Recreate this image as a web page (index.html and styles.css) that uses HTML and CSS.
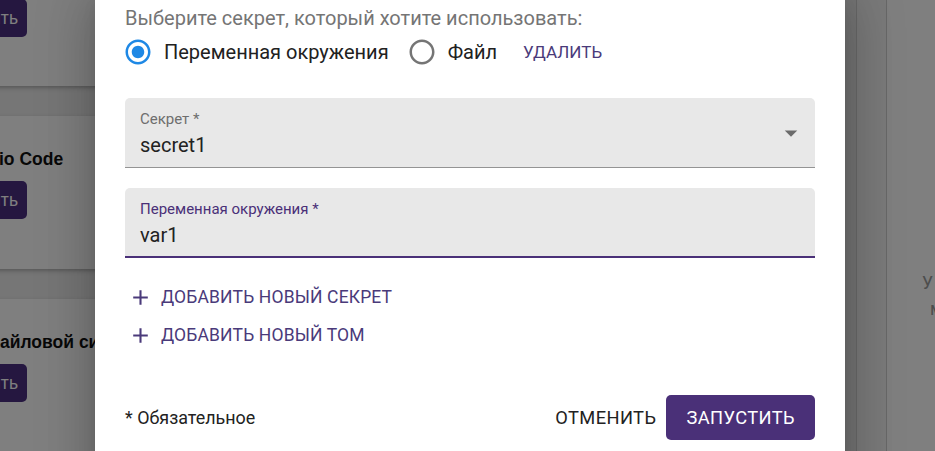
FILE: index.html
```html
<!DOCTYPE html>
<html lang="ru">
<head>
<meta charset="utf-8">
<title>Секрет</title>
<link rel="stylesheet" href="styles.css">
</head>
<body>
<div class="page">
  <div class="cards-col">
    <div class="card">
      <div class="card-title">Jupyter Notebook</div>
      <div class="card-btn">Запустить</div>
    </div>
    <div class="card">
      <div class="card-title">Visual Studio Code</div>
      <div class="card-btn">Запустить</div>
    </div>
    <div class="card">
      <div class="card-title">Доступ к файловой системе</div>
      <div class="card-btn">Запустить</div>
    </div>
  </div>
  <div class="filler"></div>
  <div class="side"></div>
  <div class="main">
    <div class="main-line">У вас пока нет запущенных</div>
    <div class="main-line indent">модулей</div>
  </div>
</div>
<div class="backdrop"></div>
<div class="dialog">
  <p class="heading">Выберите секрет, который хотите использовать:</p>
  <div class="radio-row">
    <label class="radio-opt first">
      <svg class="radio-icon checked" viewBox="0 0 24 24" width="30" height="30"><path d="M12 7c-2.76 0-5 2.24-5 5s2.24 5 5 5 5-2.24 5-5-2.24-5-5-5zm0-5C6.48 2 2 6.48 2 12s4.48 10 10 10 10-4.48 10-10S17.52 2 12 2zm0 18c-4.42 0-8-3.58-8-8s3.58-8 8-8 8 3.58 8 8-3.58 8-8 8z"/></svg>
      <span class="radio-label">Переменная окружения</span>
    </label>
    <label class="radio-opt">
      <svg class="radio-icon" viewBox="0 0 24 24" width="30" height="30"><path d="M12 2C6.48 2 2 6.48 2 12s4.48 10 10 10 10-4.48 10-10S17.52 2 12 2zm0 18c-4.42 0-8-3.58-8-8s3.58-8 8-8 8 3.58 8 8-3.58 8-8 8z"/></svg>
      <span class="radio-label">Файл</span>
    </label>
    <span class="text-btn purple">Удалить</span>
  </div>

  <div class="field">
    <div class="field-text">
      <div class="field-label">Секрет *</div>
      <div class="field-value">secret1</div>
    </div>
    <svg class="drop-icon" viewBox="0 0 24 24" width="30" height="30"><path d="M7 10l5 5 5-5z"/></svg>
  </div>

  <div class="field focused">
    <div class="field-text">
      <div class="field-label">Переменная окружения *</div>
      <div class="field-value">var1</div>
    </div>
  </div>

  <div class="add-list">
    <div class="add-btn">
      <svg viewBox="0 0 24 24" width="25" height="25"><path d="M19 13h-6v6h-2v-6H5v-2h6V5h2v6h6v2z"/></svg>
      <span>Добавить новый секрет</span>
    </div>
    <div class="add-btn">
      <svg viewBox="0 0 24 24" width="25" height="25"><path d="M19 13h-6v6h-2v-6H5v-2h6V5h2v6h6v2z"/></svg>
      <span>Добавить новый том</span>
    </div>
  </div>

  <div class="footer">
    <span class="required">* Обязательное</span>
    <div class="actions">
      <span class="text-btn dark">Отменить</span>
      <span class="primary-btn">Запустить</span>
    </div>
  </div>
</div>
</body>
</html>
```
FILE: styles.css
```css
html, body {
  margin: 0;
  padding: 0;
}
body {
  width: 935px;
  height: 451px;
  overflow: hidden;
  position: relative;
  font-family: Roboto, "Liberation Sans", sans-serif;
}

/* background page */
.page {
  display: flex;
  height: 451px;
  background: #ececec;
}
.cards-col {
  flex: 0 0 400px;
  margin-left: -116px;
  margin-top: -66px;
  display: flex;
  flex-direction: column;
  gap: 30px;
}
.card {
  background: #fff;
  height: 153px;
  box-sizing: border-box;
  padding: 28px 20px 0;
  box-shadow: 0 2px 4px rgba(0, 0, 0, 0.25);
}
.card-title {
  font-family: "Liberation Sans", Arial, sans-serif;
  font-weight: bold;
  font-size: 17.5px;
  line-height: 30px;
  color: #111;
  white-space: nowrap;
}
.card-btn {
  display: inline-block;
  margin-top: 7px;
  margin-left: 23px;
  height: 38px;
  padding: 0 9px;
  border-radius: 5px;
  background: #4a2e80;
  color: #fff;
  font-family: "Liberation Sans", Arial, sans-serif;
  font-size: 17.5px;
  line-height: 38px;
}
.filler {
  flex: 0 0 572px;
}
.side {
  flex: 0 0 29px;
  background: #f4f4f4;
  border-left: 1px solid #d0d0d0;
  border-right: 1px solid #d0d0d0;
}
.main {
  flex: 1;
  background: #fff;
  padding: 270px 0 0 35px;
  color: #9a9a9a;
  font-size: 17.5px;
  line-height: 26px;
  white-space: nowrap;
  overflow: hidden;
}
.main-line.indent {
  padding-left: 8px;
}

.backdrop {
  position: absolute;
  inset: 0;
  background: rgba(0, 0, 0, 0.5);
}

/* dialog */
.dialog {
  position: absolute;
  left: 95px;
  top: -20px;
  width: 750px;
  height: 520px;
  box-sizing: border-box;
  padding: 26px 30px 0;
  background: #fff;
  border-radius: 5px;
  box-shadow: 0 14px 19px -9px rgba(0, 0, 0, 0.2), 0 30px 48px 4px rgba(0, 0, 0, 0.14), 0 11px 58px 10px rgba(0, 0, 0, 0.12);
}
.heading {
  margin: 0;
  font-size: 20px;
  line-height: 24px;
  color: #757575;
}
.radio-row {
  display: flex;
  align-items: center;
  height: 40px;
  margin-top: 2px;
}
.radio-opt {
  display: flex;
  align-items: center;
  gap: 11px;
}
.radio-opt.first {
  margin-left: -2px;
  margin-right: 18px;
}
.radio-icon {
  fill: #757575;
  display: block;
}
.radio-icon.checked {
  fill: #1e88e5;
}
.radio-label {
  font-size: 20px;
  line-height: 24px;
  color: #212121;
}
.text-btn {
  display: inline-block;
  padding: 0 10px;
  text-transform: uppercase;
}
.text-btn.purple {
  color: #4a3a7a;
  margin-left: 16px;
  font-size: 17px;
  line-height: 24px;
}
.text-btn.dark {
  color: #222;
  font-size: 18.3px;
  letter-spacing: 0.4px;
  line-height: 45px;
}

.field {
  margin-top: 26px;
  height: 70px;
  box-sizing: border-box;
  padding: 11px 15px 0;
  background: #e8e8e8;
  border-radius: 5px 5px 0 0;
  border-bottom: 1px solid #949494;
  display: flex;
  justify-content: space-between;
  align-items: flex-start;
}
.field.focused {
  margin-top: 20px;
  border-bottom: 2px solid #4a3078;
}
.field-label {
  font-size: 15px;
  line-height: 20px;
  color: #6e6e6e;
}
.field.focused .field-label {
  color: #4a3078;
}
.field-value {
  margin-top: 2px;
  font-size: 20px;
  line-height: 28px;
  color: #222;
}
.drop-icon {
  fill: #6b6b6b;
  display: block;
  margin-top: 9px;
  margin-right: -6px;
}

.add-list {
  margin-top: 20px;
  display: flex;
  flex-direction: column;
}
.add-btn {
  display: flex;
  align-items: center;
  gap: 8px;
  height: 38px;
  padding-left: 3px;
  color: #4a3a7a;
  font-size: 17.5px;
  text-transform: uppercase;
  letter-spacing: 0.15px;
}
.add-btn svg {
  fill: #4a3a7a;
  display: block;
}

.footer {
  margin-top: 41px;
  height: 45px;
  display: flex;
  align-items: center;
  justify-content: space-between;
}
.required {
  font-size: 17.9px;
  color: #222;
}
.actions {
  display: flex;
  align-items: center;
}
.primary-btn {
  display: inline-block;
  height: 45px;
  line-height: 45px;
  padding: 0 20px;
  border-radius: 5px;
  background: #4a3078;
  color: #fff;
  font-size: 18.3px;
  text-transform: uppercase;
  letter-spacing: 0.4px;
}
```
